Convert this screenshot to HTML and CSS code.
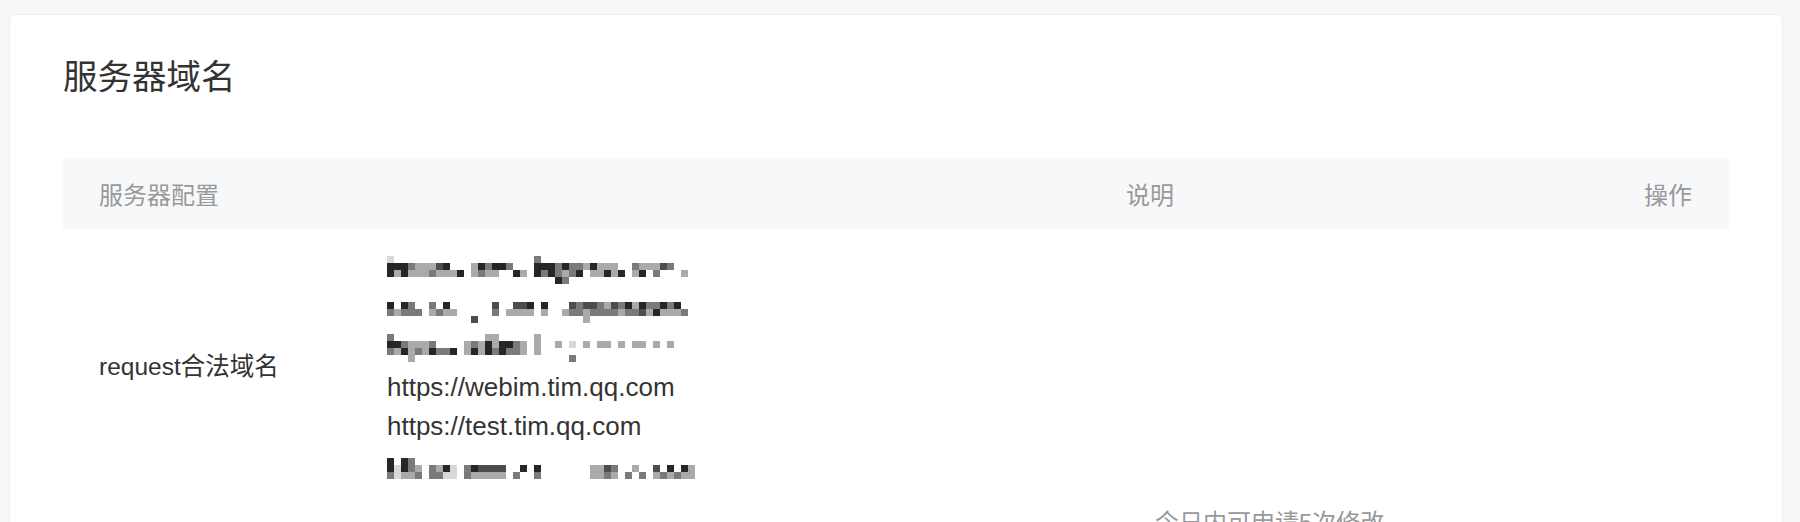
FILE: index.html
```html
<!DOCTYPE html>
<html lang="zh-CN">
<head>
<meta charset="utf-8">
<title>服务器域名</title>
<link rel="stylesheet" href="styles.css">
<script src="script.js" defer></script>
</head>
<body>
<div class="card">
  <h1 class="title">服务器域名</h1>
  <div class="table">
    <div class="row head">
      <div class="cell">服务器配置</div>
      <div class="cell"></div>
      <div class="cell">说明</div>
      <div class="cell op">操作</div>
    </div>
    <div class="row body first">
      <div class="cell label">request合法域名</div>
      <div class="cell domains">
        <div class="line mosaic" data-rows="1....................3....................|555322245...253553...555353325222..322243.|52522232225.2322..52.5353235.22525.25.3...2|........................53................"></div>
        <div class="line mosaic" data-rows="............................................|5.53..3.5......4..445.5...4344324352533535|32333.2322.....3.2222.2..233233332334252223|............4...............2..............."></div>
        <div class="line mosaic" data-rows="3.............22.....2....................|5532223....232525532.2..2.1.2.22.2.22.2.2.|3252325335.252535332.2....................|...2......................3..............."></div>
        <div class="line">https://webim.tim.qq.com</div>
        <div class="line">https://test.tim.qq.com</div>
        <div class="line mosaic" data-rows="............................................|5.53........................................|51532.3251.354444..5.5.......2243..2..4.5.52|31223.3311.322222.3..3.......2232.3.3.232322"></div>
      </div>
      <div class="cell"></div>
      <div class="cell"></div>
    </div>
    <div class="row body next">
      <div class="cell label"></div>
      <div class="cell"></div>
      <div class="cell desc">今日内可申请5次修改</div>
      <div class="cell"></div>
    </div>
  </div>
</div>
</body>
</html>
```

FILE: styles.css
```css
html, body {
  margin: 0;
  height: 100%;
  overflow: hidden;
}
body {
  background: #f7f8fa;
  padding: 14px 17px 0 9px;
  box-sizing: border-box;
  font-family: "Liberation Sans", "Noto Sans CJK SC", sans-serif;
  color: #333;
}
.card {
  background: #fff;
  border: 1px solid #eceef1;
  border-radius: 6px;
  padding: 38px 53px 40px 53px;
  height: 700px;
  box-sizing: border-box;
}
.title {
  margin: 0 0 57px 0;
  font-size: 34.5px;
  line-height: 48px;
  font-weight: normal;
  color: #333;
}
.table {
  display: flex;
  flex-direction: column;
}
.row {
  display: grid;
  grid-template-columns: 288px 739px 1fr 200px;
}
.cell {
  padding-left: 36px;
}
.head {
  background: #f7f8fa;
  height: 71px;
  align-items: center;
  font-size: 24px;
  color: #999;
}
.head .op {
  text-align: right;
  padding-right: 37px;
}
.body {
  align-items: center;
}
.first {
  padding: 22px 0 18px 0;
}
.label {
  font-size: 24.5px;
  color: #333;
  padding-bottom: 8px;
}
.domains {
  font-size: 26px;
  line-height: 39px;
  color: #333;
}
.line {
  height: 39px;
  white-space: nowrap;
}
.mosaic {
  box-sizing: border-box;
  padding-top: 5px;
}
.mosaic svg {
  display: block;
}
.next {
  align-items: start;
}
.desc {
  padding-left: 65px;
  font-size: 24px;
  line-height: 39px;
  color: #999;
}
```

FILE: script.js
```js
(function () {
  var colors = {
    "1": "#d8d8d8",
    "2": "#aaaaaa",
    "3": "#7a7a7a",
    "4": "#4d4d4d",
    "5": "#262626"
  };
  var size = 7;
  var ns = "http://www.w3.org/2000/svg";
  document.querySelectorAll(".mosaic").forEach(function (el) {
    var rows = el.getAttribute("data-rows").split("|");
    var cols = 0;
    rows.forEach(function (r) { cols = Math.max(cols, r.length); });
    var svg = document.createElementNS(ns, "svg");
    svg.setAttribute("width", cols * size);
    svg.setAttribute("height", rows.length * size);
    rows.forEach(function (r, y) {
      for (var x = 0; x < r.length; x++) {
        var c = colors[r.charAt(x)];
        if (!c) continue;
        var rect = document.createElementNS(ns, "rect");
        rect.setAttribute("x", x * size);
        rect.setAttribute("y", y * size);
        rect.setAttribute("width", size);
        rect.setAttribute("height", size);
        rect.setAttribute("fill", c);
        svg.appendChild(rect);
      }
    });
    el.appendChild(svg);
  });
})();
```
